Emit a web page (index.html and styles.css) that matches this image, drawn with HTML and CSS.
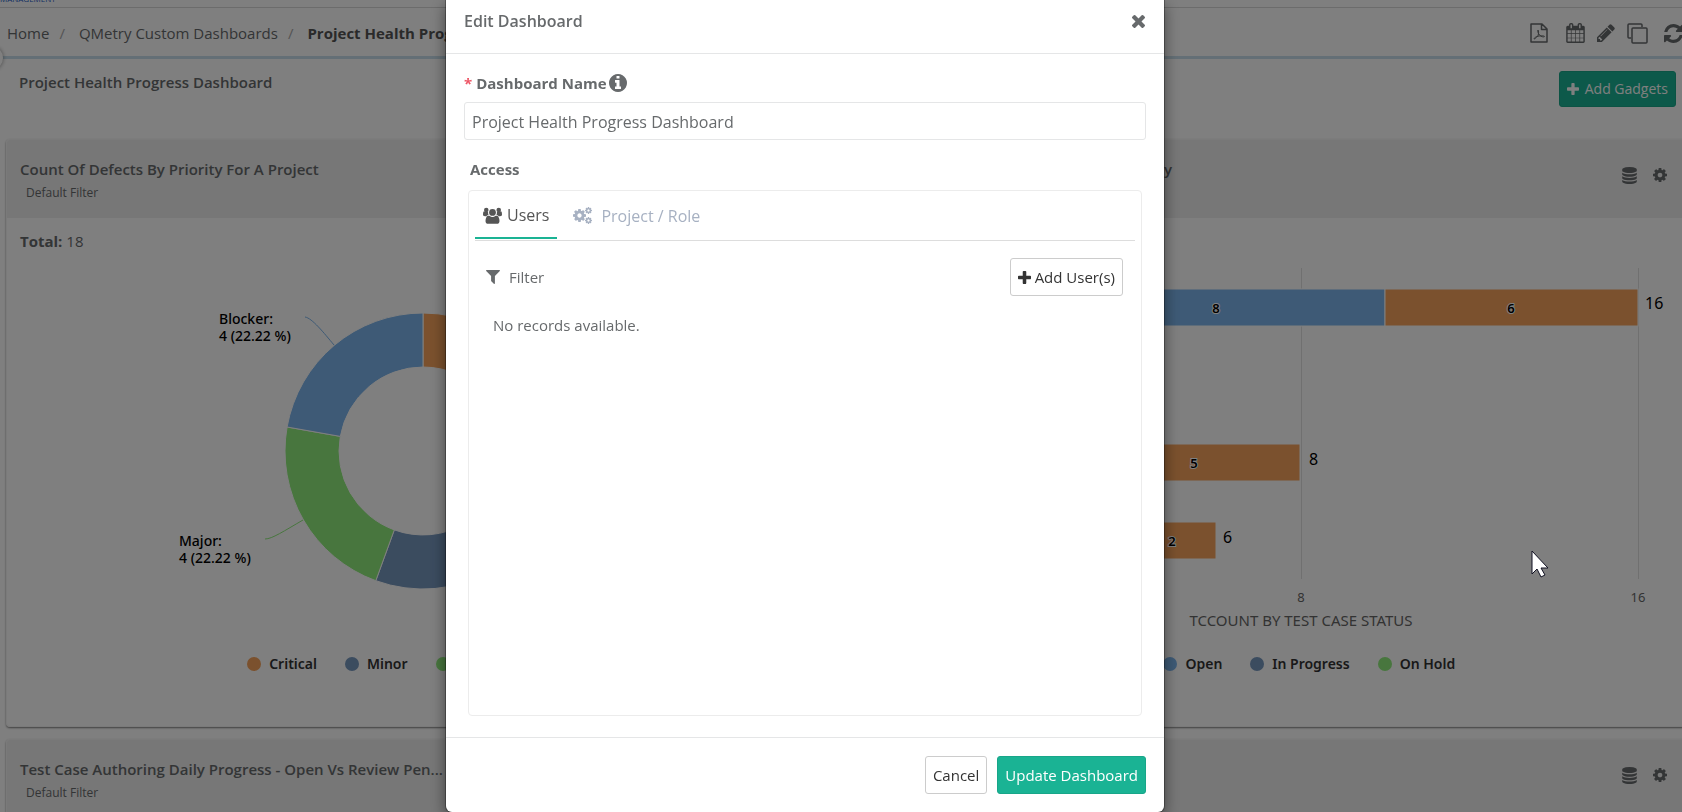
FILE: index.html
```html
<!DOCTYPE html>
<html lang="en">
<head>
    <meta charset="UTF-8">
    <meta name="viewport" content="width=device-width, initial-scale=1.0">
    <title>Project Health Progress Dashboard</title>
    <link rel="stylesheet" href="styles.css">
</head>
<body>

<!-- Icon set -->
<svg class="icon-set" width="0" height="0" aria-hidden="true">
    <symbol id="i-plus" viewBox="192 128 1408 1408"><path d="M1600 736v192q0 40-28 68t-68 28h-416v416q0 40-28 68t-68 28h-192q-40 0-68-28t-28-68v-416h-416q-40 0-68-28t-28-68v-192q0-40 28-68t68-28h416v-416q0-40 28-68t68-28h192q40 0 68 28t28 68v416h416q40 0 68 28t28 68z"/></symbol>
    <symbol id="i-times" viewBox="302 366 1188 1188"><path d="M1490 1322q0 40-28 68l-136 136q-28 28-68 28t-68-28l-294-294-294 294q-28 28-68 28t-68-28l-136-136q-28-28-28-68t28-68l294-294-294-294q-28-28-28-68t28-68l136-136q28-28 68-28t68 28l294 294 294-294q28-28 68-28t68 28l136 136q28 28 28 68t-28 68l-294 294 294 294q28 28 28 68z"/></symbol>
    <symbol id="i-filter" viewBox="192 256 1408 1408"><path d="M1595 295q17 41-14 70l-493 493v742q0 42-39 59-13 5-25 5-27 0-45-19l-256-256q-19-19-19-45v-486l-493-493q-31-29-14-70 17-39 59-39h1280q42 0 59 39z"/></symbol>
    <symbol id="i-info" viewBox="128 128 1536 1536"><path d="M1152 1376v-160q0-14-9-23t-23-9h-96v-512q0-14-9-23t-23-9h-320q-14 0-23 9t-9 23v160q0 14 9 23t23 9h96v320h-96q-14 0-23 9t-9 23v160q0 14 9 23t23 9h448q14 0 23-9t9-23zm-128-896v-160q0-14-9-23t-23-9h-192q-14 0-23 9t-9 23v160q0 14 9 23t23 9h192q14 0 23-9t9-23zm640 416q0 209-103 385.5t-279.5 279.5-385.5 103-385.5-103-279.5-279.5-103-385.5 103-385.5 279.5-279.5 385.5-103 385.5 103 279.5 279.5 103 385.5z"/></symbol>
    <symbol id="i-cog" viewBox="128 128 1536 1536"><path d="M1152 896q0-106-75-181t-181-75-181 75-75 181 75 181 181 75 181-75 75-181zm512-109v222q0 12-8 23t-20 13l-185 28q-19 54-39 91 35 50 107 138 10 12 10 25t-9 23q-27 37-99 108t-94 71q-12 0-26-9l-138-108q-44 23-91 38-16 136-29 186-7 28-36 28h-222q-14 0-24.500-8.500t-11.500-21.500l-28-184q-49-16-90-37l-141 107q-10 9-25 9-14 0-25-11-126-114-165-168-7-10-7-23 0-12 8-23 15-21 51-66.500t54-70.500q-27-50-41-99l-183-27q-13-2-21-12.500t-8-23.500v-222q0-12 8-23t19-13l186-28q14-46 39-92-40-57-107-138-10-12-10-24 0-10 9-23 26-36 98.500-107.500t94.500-71.500q13 0 26 10l138 107q44-23 91-38 16-136 29-186 7-28 36-28h222q14 0 24.500 8.500t11.500 21.500l28 184q49 16 90 37l142-107q9-9 24-9 13 0 25 10 129 119 165 170 7 8 7 22 0 12-8 23-15 21-51 66.500t-54 70.500q26 50 41 98l183 28q13 2 21 12.500t8 23.500z"/></symbol>
    <symbol id="i-cogs" viewBox="0 0 19 18">
        <use href="#i-cog" x="0" y="2" width="13" height="13"/>
        <use href="#i-cog" x="12" y="0" width="7" height="7"/>
        <use href="#i-cog" x="12" y="10" width="7" height="7"/>
    </symbol>
    <symbol id="i-users" viewBox="0 0 1920 1792">
        <circle cx="330" cy="384" r="230"/>
        <circle cx="1590" cy="384" r="230"/>
        <circle cx="960" cy="640" r="340"/>
        <path d="M560 896q-129 5-232 128h-134q-82 0-138-40.500t-56-118.500q0-353 124-353 6 0 43.500 21t97.500 42.500 119 21.500q67 0 133-23-5 37-5 66 0 139 48 256zm1104 637q0 120-73 189.500t-194 69.500h-874q-121 0-194-69.500t-73-189.500q0-53 3.500-103.500t14-109 26.500-108.500 43-97.500 62-81 85.500-53.500 111.500-20q10 0 43 21.500t73 48 107 48 135 21.500 135-21.500 107-48 73-48 43-21.500q61 0 111.500 20t85.500 53.500 62 81 43 97.500 26.500 108.500 14 109 3.500 103.500zm256-668q0 78-56 118.500t-138 40.500h-134q-103-123-232-128 48-117 48-256 0-29-5-66 66 23 133 23 59 0 119-21.500t97.500-42.500 43.500-21q124 0 124 353z"/>
    </symbol>
    <symbol id="i-database" viewBox="128 0 1536 1792"><path d="M896 768q237 0 443-43t325-127v170q0 69-103 128t-280 93.500-385 34.500-385-34.500-280-93.500-103-128v-170q119 84 325 127t443 43zm0 768q237 0 443-43t325-127v170q0 69-103 128t-280 93.500-385 34.500-385-34.500-280-93.500-103-128v-170q119 84 325 127t443 43zm0-384q237 0 443-43t325-127v170q0 69-103 128t-280 93.500-385 34.500-385-34.500-280-93.500-103-128v-170q119 84 325 127t443 43zm0-1152q208 0 385 34.500t280 93.500 103 128v128q0 69-103 128t-280 93.500-385 34.500-385-34.500-280-93.500-103-128v-128q0-69 103-128t280-93.500 385-34.500z"/></symbol>
    <symbol id="i-refresh" viewBox="128 128 1536 1536"><path d="M1639 1056q0 5-1 7-64 268-268 434.500t-478 166.500q-146 0-282.500-55t-243.500-157l-129 129q-19 19-45 19t-45-19-19-45v-448q0-26 19-45t45-19h448q26 0 45 19t19 45-19 45l-137 137q71 66 161 102t187 36q134 0 250-65t186-179q11-17 53-117 8-23 30-23h192q13 0 22.500 9.500t9.500 22.500zm25-800v448q0 26-19 45t-45 19h-448q-26 0-45-19t-19-45 19-45l138-138q-148-137-349-137-134 0-250 65t-186 179q-11 17-53 117-8 23-30 23h-199q-13 0-22.500-9.500t-9.500-22.500v-7q65-268 270-434.500t480-166.500q146 0 284 55.500t245 156.500l130-129q19-19 45-19t45 19 19 45z"/></symbol>
    <symbol id="i-pencil" viewBox="128 128 1536 1536"><path d="M491 1536l91-91-235-235-91 91v107h128v128h107zm523-928q0-22-22-22-10 0-17 7l-542 542q-7 7-7 17 0 22 22 22 10 0 17-7l542-542q7-7 7-17zm-54-192l416 416-832 832h-416v-416zm683 96q0 53-37 90l-166 166-416-416 166-165q36-38 90-38 53 0 91 38l235 234q37 39 37 91z"/></symbol>
    <symbol id="i-calendar" viewBox="64 0 1664 1792"><path d="M192 1664h288v-288h-288v288zm352 0h320v-288h-320v288zm-352-352h288v-320h-288v320zm352 0h320v-320h-320v320zm-352-384h288v-288h-288v288zm736 736h320v-288h-320v288zm-384-736h320v-288h-320v288zm768 736h288v-288h-288v288zm-384-352h320v-320h-320v320zm-352-864v-288q0-13-9.500-22.500t-22.500-9.500h-64q-13 0-22.500 9.500t-9.500 22.500v288q0 13 9.500 22.500t22.500 9.500h64q13 0 22.500-9.500t9.500-22.500zm736 864h288v-320h-288v320zm-384-384h320v-288h-320v288zm384 0h288v-288h-288v288zm32-480v-288q0-13-9.500-22.500t-22.500-9.500h-64q-13 0-22.500 9.500t-9.500 22.500v288q0 13 9.500 22.500t22.500 9.500h64q13 0 22.500-9.500t9.500-22.500zm384-64v1280q0 52-38 90t-90 38h-1408q-52 0-90-38t-38-90v-1280q0-52 38-90t90-38h128v-96q0-66 47-113t113-47h64q66 0 113 47t47 113v96h384v-96q0-66 47-113t113-47h64q66 0 113 47t47 113v96h128q52 0 90 38t38 90z"/></symbol>
    <symbol id="i-clone" viewBox="0 0 21 21"><path d="M4 15H2a1 1 0 0 1-1-1V2a1 1 0 0 1 1-1h12a1 1 0 0 1 1 1v2" fill="none" stroke="currentColor" stroke-width="1.500"/><rect x="5" y="5" width="15" height="15" rx="1" fill="none" stroke="currentColor" stroke-width="1.500"/></symbol>
    <symbol id="i-pdf" viewBox="0 0 18 20"><path d="M1 1h11l5 5v13H1zM11.500 1v5.500H17" fill="none" stroke="currentColor" stroke-width="1.500" stroke-linejoin="round"/><path d="M8 12.500C9 10 8.500 8 8 7c-.8 2 .8 5 3 6.200 1.800 1 3.500.8 3.500.3 0-.8-3.500-.9-6.500-.3-2 .5-4 1.800-4 2.600 0 .6 1.800-.3 4-3.300z" fill="none" stroke="currentColor" stroke-width="1"/></symbol>
</svg>

<div class="page">
    <div class="topbar"><span class="logo-text">MANAGEMENT</span></div>

    <nav class="crumbs">
        <ol class="crumb-list">
            <li><a href="#">Home</a></li>
            <li><a href="#">QMetry Custom Dashboards</a></li>
            <li><strong>Project Health Progress Dashboard</strong></li>
        </ol>
        <div class="tools">
            <button aria-label="Export PDF"><svg width="18" height="20"><use href="#i-pdf"/></svg></button>
            <button aria-label="Schedule"><svg width="19" height="20"><use href="#i-calendar"/></svg></button>
            <button aria-label="Edit"><svg width="18" height="18"><use href="#i-pencil"/></svg></button>
            <button aria-label="Clone"><svg width="21" height="21"><use href="#i-clone"/></svg></button>
            <button aria-label="Refresh"><svg width="19" height="19"><use href="#i-refresh"/></svg></button>
        </div>
        <button class="menu-toggle" aria-label="Toggle menu"></button>
    </nav>

    <div class="title-row">
        <h1>Project Health Progress Dashboard</h1>
        <button class="btn btn-primary btn-gadgets"><svg width="12" height="12"><use href="#i-plus"/></svg>Add Gadgets</button>
    </div>

    <div class="gadgets">
        <section class="gadget">
            <header class="gadget-head">
                <div>
                    <h2>Count Of Defects By Priority For A Project</h2>
                    <small>Default Filter</small>
                </div>
            </header>
            <p class="total"><b>Total:</b> 18</p>
            <svg class="chart" viewBox="0 0 832 380">
                <g class="slices">
                    <path class="orange" d="M416 51A138 138 0 0 1 551.900 213L498.700 203.600A84 84 0 0 0 416 105z"/>
                    <path class="steel" d="M551.900 213A138 138 0 0 1 368.800 318.700L387.300 267.900A84 84 0 0 0 498.700 203.600z"/>
                    <path class="green" d="M368.800 318.700A138 138 0 0 1 280.100 165L333.300 174.400A84 84 0 0 0 387.300 267.900z"/>
                    <path class="blue" d="M280.100 165A138 138 0 0 1 416 51V105A84 84 0 0 0 333.300 174.400z"/>
                </g>
                <path class="lead lead-blue" d="M298 55C305 56 317 71 327 83"/>
                <path class="lead lead-green" d="M258 277C265 277 277 269 296 258"/>
                <text class="slice-label" x="212" y="62">Blocker:<tspan x="212" dy="17">4 (22.22 %)</tspan></text>
                <text class="slice-label" x="172" y="284">Major:<tspan x="172" dy="17">4 (22.22 %)</tspan></text>
            </svg>
            <ul class="legend">
                <li><i class="dot dot-orange"></i>Critical</li>
                <li><i class="dot dot-steel"></i>Minor</li>
                <li><i class="dot dot-green"></i>Major</li>
                <li><i class="dot dot-blue"></i>Blocker</li>
            </ul>
        </section>

        <section class="gadget">
            <header class="gadget-head">
                <div>
                    <h2>Count Of Test Cases By Status And Priority</h2>
                    <small>Default Filter</small>
                </div>
                <div class="gadget-tools">
                    <button aria-label="Data"><svg width="15" height="17"><use href="#i-database"/></svg></button>
                    <button aria-label="Settings"><svg width="14" height="14"><use href="#i-cog"/></svg></button>
                </div>
            </header>
            <p class="total"></p>
            <svg class="chart" viewBox="0 0 832 380">
                <path class="grid-line" d="M448.500 6V317M785.500 6V317"/>
                <g class="bars">
                    <rect class="blue" x="196" y="27" width="336" height="37"/>
                    <rect class="orange" x="532" y="27" width="253" height="37"/>
                    <rect class="orange" x="238" y="182" width="209" height="37"/>
                    <rect class="orange" x="280" y="260" width="83" height="37"/>
                </g>
                <g class="bar-value">
                    <text x="363" y="51">8</text>
                    <text x="658" y="51">6</text>
                    <text x="341" y="206">5</text>
                    <text x="319" y="284">2</text>
                </g>
                <g class="bar-total">
                    <text x="792" y="47">16</text>
                    <text x="456" y="203">8</text>
                    <text x="370" y="281">6</text>
                </g>
                <g class="axis">
                    <text x="448" y="340">8</text>
                    <text x="785" y="340">16</text>
                    <text class="axis-title" x="448" y="364">TCCOUNT BY TEST CASE STATUS</text>
                </g>
            </svg>
            <ul class="legend">
                <li><i class="dot dot-orange"></i>New</li>
                <li><i class="dot dot-blue"></i>Open</li>
                <li><i class="dot dot-steel"></i>In Progress</li>
                <li><i class="dot dot-green"></i>On Hold</li>
            </ul>
        </section>

        <section class="gadget">
            <header class="gadget-head">
                <div>
                    <h2>Test Case Authoring Daily Progress - Open Vs Review Pen...</h2>
                    <small>Default Filter</small>
                </div>
            </header>
        </section>

        <section class="gadget">
            <header class="gadget-head">
                <div></div>
                <div class="gadget-tools">
                    <button aria-label="Data"><svg width="15" height="17"><use href="#i-database"/></svg></button>
                    <button aria-label="Settings"><svg width="14" height="14"><use href="#i-cog"/></svg></button>
                </div>
            </header>
        </section>
    </div>
</div>

<div class="overlay">
    <form class="modal" role="dialog" aria-labelledby="modal-title" onsubmit="return false">
        <header class="modal-head">
            <h3 id="modal-title">Edit Dashboard</h3>
            <button type="button" class="close" aria-label="Close"><svg width="13" height="13"><use href="#i-times"/></svg></button>
        </header>

        <div class="modal-body">
            <label class="name-label" for="dashName"><span class="req">*</span>Dashboard Name<svg width="18" height="18"><use href="#i-info"/></svg></label>
            <input class="name-input" type="text" id="dashName" value="Project Health Progress Dashboard">

            <h4 class="access-title">Access</h4>
            <div class="access">
                <div class="tabs" role="tablist">
                    <button type="button" class="tab active" role="tab"><svg width="19" height="18"><use href="#i-users"/></svg>Users</button>
                    <button type="button" class="tab tab-role" role="tab"><svg width="19" height="18"><use href="#i-cogs"/></svg>Project / Role</button>
                </div>
                <div class="access-bar">
                    <button type="button" class="filter"><svg width="14" height="14"><use href="#i-filter"/></svg>Filter</button>
                    <button type="button" class="btn btn-default"><svg width="13" height="13"><use href="#i-plus"/></svg>Add User(s)</button>
                </div>
                <p class="empty">No records available.</p>
            </div>
        </div>

        <footer class="modal-foot">
            <button type="button" class="btn btn-default">Cancel</button>
            <button type="submit" class="btn btn-primary">Update Dashboard</button>
        </footer>
    </form>
</div>

<svg class="cursor" width="19" height="28" viewBox="0 0 19 28"><path d="M1 1v23l5-5 4 8 4-2-4-7h7z" fill="#fff" stroke="#112" stroke-width="1"/></svg>

</body>
</html>
```
FILE: styles.css
```css
:root {
    --primary: #1ab394;
    --primary-dark: #18a689;
    --text: #676a6c;
    --line: #e5e6e7;
    --orange: #f7a35c;
    --steel: #7798bf;
    --green: #90ed7d;
    --blue: #7cb5ec;
}
* {
    box-sizing: border-box;
}
body {
    margin: 0;
    height: 100vh;
    overflow: hidden;
    font-family: "Open Sans", "Noto Sans", sans-serif;
    font-size: 15px;
    line-height: 22px;
    color: var(--text);
    background: #fff;
}
h1, h2, h3, h4, p, ul, ol {
    margin: 0;
    padding: 0;
}
ul, ol {
    list-style: none;
}
button {
    padding: 0;
    border: none;
    background: none;
    font: inherit;
    color: inherit;
    cursor: pointer;
}
svg {
    fill: currentColor;
    flex: none;
}
a {
    color: inherit;
    text-decoration: none;
}
.icon-set {
    position: absolute;
}

/* Page */
.page {
    height: 100vh;
    overflow: hidden;
}
.topbar {
    height: 8px;
    border-bottom: 1px solid #d8d8d8;
    display: flex;
    align-items: flex-end;
}
.logo-text {
    font-size: 8px;
    line-height: 16px;
    color: #2a62c8;
}
.crumbs {
    position: relative;
    display: flex;
    justify-content: space-between;
    align-items: center;
    height: 51px;
    padding: 2px 0 0 7px;
    border-bottom: 3px solid #c9dfec;
}
.crumb-list {
    display: flex;
}
.crumb-list li + li::before {
    content: "/";
    padding: 0 14px 0 10px;
    color: #aaa;
}
.crumb-list strong {
    color: #555;
}
.tools {
    display: flex;
    align-items: center;
    gap: 16px;
    margin-right: -1px;
}
.tools button, .gadget-tools button {
    display: flex;
}
.tools button:nth-child(2), .tools button:nth-child(3) {
    margin-right: -4px;
}
.tools button:nth-child(1) {
    margin-right: 2px;
}
.menu-toggle {
    position: absolute;
    left: -21px;
    bottom: -14px;
    width: 24px;
    height: 24px;
    border-radius: 50%;
    background: #fff;
    box-shadow: 0 0 4px rgba(0,0,0,0.4);
}
.title-row {
    display: flex;
    justify-content: space-between;
    align-items: flex-start;
    height: 80px;
    padding: 12px 6px 0 19px;
}
h1, h2 {
    font-size: 15px;
    font-weight: 600;
    line-height: 22px;
}
.btn {
    display: inline-flex;
    align-items: center;
    justify-content: center;
    gap: 4px;
    height: 38px;
    padding: 0 7px;
    border: 1px solid transparent;
    border-radius: 3px;
    white-space: nowrap;
}
.btn-primary {
    color: #fff;
    background: var(--primary);
    border-color: var(--primary-dark);
}
.btn-default {
    color: #333;
    background: #fff;
    border-color: #ccc;
}
.btn-gadgets {
    gap: 6px;
    height: 36px;
    font-size: 14px;
}

/* Gadgets */
.gadgets {
    display: grid;
    grid-template-columns: 1fr 1fr;
    gap: 12px;
    margin: 0 -4px 0 6px;
}
.gadget {
    min-height: 588px;
    border: 1px solid #f4f4f4;
    border-radius: 4px;
    box-shadow: 0 1px 2px rgba(0,0,0,0.5);
}
.gadget-head {
    display: flex;
    justify-content: space-between;
    height: 78px;
    padding: 18px 18px 0 13px;
    background: #eee;
    border-radius: 3px 3px 0 0;
}
.gadget-head small {
    display: block;
    padding-left: 6px;
    font-size: 12px;
    line-height: 26px;
}
.gadget-tools {
    display: flex;
    align-items: center;
    gap: 16px;
    height: 34px;
}
.total {
    height: 44px;
    padding: 12px 13px 0;
}
.chart {
    display: block;
    width: 100%;
    font-family: "Noto Sans", sans-serif;
}
.orange { fill: var(--orange); }
.steel { fill: var(--steel); }
.green { fill: var(--green); }
.blue { fill: var(--blue); }
.slices path, .bars rect {
    stroke: #fff;
    stroke-width: 1;
}
.lead {
    fill: none;
}
.lead-blue { stroke: var(--blue); }
.lead-green { stroke: var(--green); }
.slice-label {
    font-size: 14px;
    font-weight: 500;
    fill: #000;
}
.grid-line {
    stroke: #e0e0e0;
}
.bar-value text {
    font-size: 13px;
    font-weight: 600;
    text-anchor: middle;
    fill: #000;
    stroke: #fff;
    stroke-width: 2;
    paint-order: stroke;
}
.bar-total text {
    font-size: 16px;
    fill: #000;
}
.axis text {
    font-size: 13px;
    text-anchor: middle;
    fill: #666;
}
.axis .axis-title {
    font-size: 15px;
}
.legend {
    display: flex;
    justify-content: center;
    gap: 28px;
    padding-top: 11px;
    font-family: "Noto Sans", sans-serif;
    font-size: 14px;
    font-weight: 600;
    color: #333;
}
.legend li {
    display: flex;
    align-items: center;
    gap: 8px;
}
.dot {
    width: 14px;
    height: 14px;
    border-radius: 50%;
}
.dot-orange { background: var(--orange); }
.dot-steel { background: var(--steel); }
.dot-green { background: var(--green); }
.dot-blue { background: var(--blue); }

/* Modal */
.overlay {
    position: fixed;
    inset: 0;
    display: flex;
    justify-content: center;
    padding-right: 72px;
    background: rgba(0,0,0,0.5);
}
.modal {
    display: flex;
    flex-direction: column;
    width: 100%;
    max-width: 718px;
    background: #fff;
    border-radius: 0 0 6px 6px;
    box-shadow: 0 0 0 1px rgba(0,0,0,0.3), 0 5px 15px rgba(0,0,0,0.5);
}
.modal-head {
    display: flex;
    justify-content: space-between;
    padding: 10px 19px 21px 18px;
    border-bottom: 1px solid var(--line);
}
.modal-head h3 {
    font-size: 16px;
    font-weight: 600;
}
.close {
    display: flex;
    align-items: center;
}
.modal-body {
    flex: 1;
    display: flex;
    flex-direction: column;
    padding: 18px 18px 21px;
}
.name-label {
    display: flex;
    align-items: center;
    gap: 2px;
    font-weight: 700;
}
.req {
    padding-right: 2px;
    color: #ed5565;
}
.name-input {
    width: 100%;
    height: 38px;
    margin-top: 8px;
    padding: 1px 7px 0;
    border: 1px solid var(--line);
    border-radius: 3px;
    font: inherit;
    font-size: 16px;
    color: inherit;
}
.access-title {
    margin-top: 18px;
    padding-left: 6px;
    font-size: 15px;
}
.access {
    flex: 1;
    margin: 10px 4px 0;
    padding: 0 6px;
    border: 1px solid #ececec;
    border-radius: 4px;
}
.tabs {
    display: flex;
    height: 50px;
    gap: 8px;
    border-bottom: 1px solid #ddd;
}
.tab {
    display: flex;
    align-items: center;
    gap: 5px;
    height: 48px;
    padding: 2px 8px 0;
    font-size: 16px;
    color: #a7b1c2;
}
.tab-role {
    gap: 9px;
}
.tab.active {
    color: #555;
    border-bottom: 2px solid var(--primary);
}
.access-bar {
    display: flex;
    justify-content: space-between;
    align-items: center;
    padding: 17px 12px 0 11px;
}
.filter {
    display: flex;
    align-items: center;
    gap: 9px;
}
.empty {
    padding: 18px 18px 0;
}
.modal-foot {
    display: flex;
    justify-content: flex-end;
    gap: 10px;
    padding: 18px;
    border-top: 1px solid var(--line);
}

.cursor {
    position: absolute;
    left: 1531px;
    top: 550px;
}
```
